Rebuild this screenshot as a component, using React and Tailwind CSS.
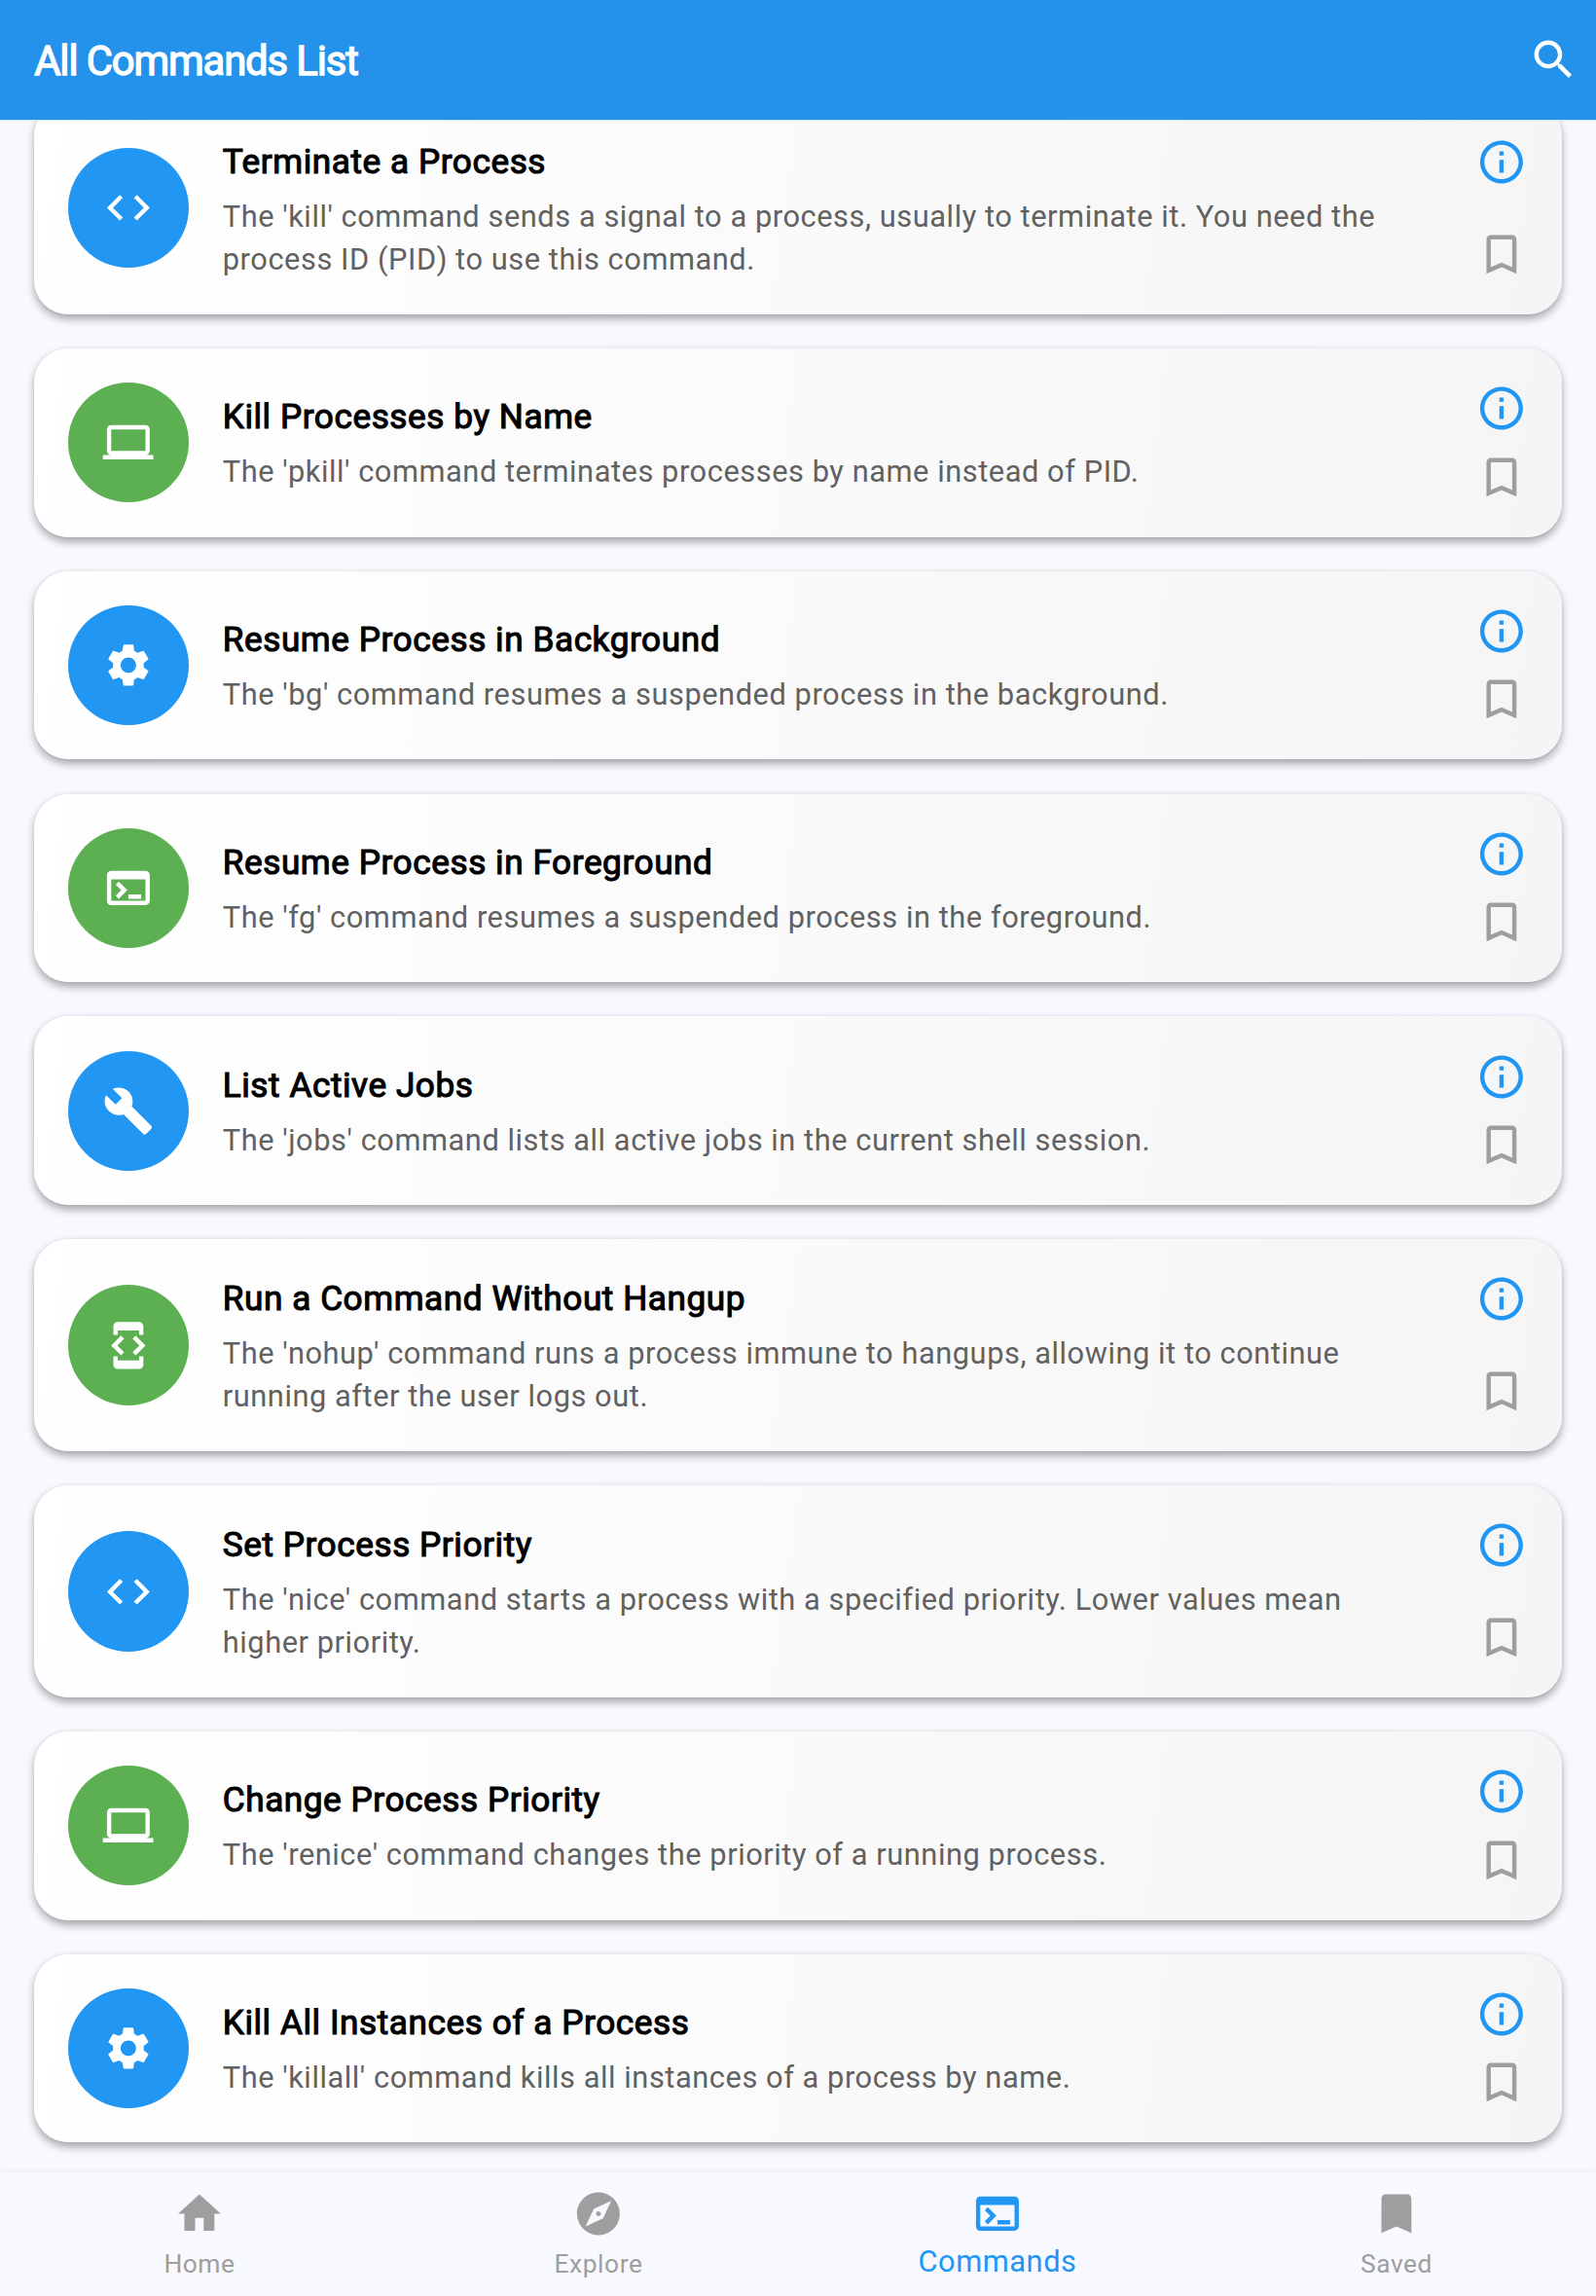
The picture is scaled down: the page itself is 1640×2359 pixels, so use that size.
import { MdCode, MdComputer, MdSettings, MdTerminal, MdBuild, MdDeveloperMode, MdInfoOutline, MdBookmarkBorder, MdSearch, MdHome, MdExplore, MdBookmark } from 'react-icons/md';

const commands = [
  { title: 'Terminate a Process', lines: ["The 'kill' command sends a signal to a process, usually to terminate it. You need the", 'process ID (PID) to use this command.'], icon: MdCode },
  { title: 'Kill Processes by Name', lines: ["The 'pkill' command terminates processes by name instead of PID."], icon: MdComputer },
  { title: 'Resume Process in Background', lines: ["The 'bg' command resumes a suspended process in the background."], icon: MdSettings },
  { title: 'Resume Process in Foreground', lines: ["The 'fg' command resumes a suspended process in the foreground."], icon: MdTerminal },
  { title: 'List Active Jobs', lines: ["The 'jobs' command lists all active jobs in the current shell session."], icon: MdBuild },
  { title: 'Run a Command Without Hangup', lines: ["The 'nohup' command runs a process immune to hangups, allowing it to continue", 'running after the user logs out.'], icon: MdDeveloperMode },
  { title: 'Set Process Priority', lines: ["The 'nice' command starts a process with a specified priority. Lower values mean", 'higher priority.'], icon: MdCode },
  { title: 'Change Process Priority', lines: ["The 'renice' command changes the priority of a running process."], icon: MdComputer },
  { title: 'Kill All Instances of a Process', lines: ["The 'killall' command kills all instances of a process by name."], icon: MdSettings },
];

const tabs = [
  { label: 'Home', icon: MdHome },
  { label: 'Explore', icon: MdExplore },
  { label: 'Commands', icon: MdTerminal, active: true },
  { label: 'Saved', icon: MdBookmark },
];

function CommandCard({ title, lines, icon: Icon, green }) {
  const tall = lines.length > 1;
  return (
    <article
      className={`flex shrink-0 gap-[35.2px] rounded-[35.2px] p-[35.2px] shadow-[0_4.4px_9px_rgba(0,0,0,0.33),0_0_3px_rgba(0,0,0,0.05)] ${
        tall ? 'h-[217.8px] bg-[linear-gradient(97.9deg,#ffffff,#f5f5f5)]' : 'h-[193.6px] bg-[linear-gradient(97deg,#ffffff,#f5f5f5)]'
      }`}
    >
      <div className={`flex size-[123.2px] shrink-0 items-center justify-center self-center rounded-full text-white ${green ? 'bg-[#5cb052]' : 'bg-[#2196f3]'}`}>
        <Icon className="size-[52.8px] -translate-x-[0.5px]" />
      </div>
      <div className={`flex min-w-0 flex-1 flex-col justify-center whitespace-nowrap ${tall ? 'pt-[0.6px]' : ''}`}>
        <h2 className={`text-[35.2px] leading-[52.8px] tracking-[0.55px] text-black [-webkit-text-stroke:1.1px_black] ${tall ? 'mb-[8.6px]' : 'mb-[8px]'}`}>{title}</h2>
        {lines.map((line) => (
          <p key={line} className="text-[30.8px] leading-[44px] tracking-[0.55px] text-[#616161]">{line}</p>
        ))}
      </div>
      <div className="flex flex-col justify-between">
        <MdInfoOutline className="size-[52.8px] -translate-x-[0.5px] text-[#2196f3]" />
        <MdBookmarkBorder className="size-[52.8px] -translate-x-[0.5px] text-[#9e9e9e]" />
      </div>
    </article>
  );
}

export default function App() {
  return (
    <div className="flex h-[2359px] w-[1640px] flex-col overflow-hidden bg-[#f8f9ff] font-[Roboto,sans-serif]">
      <header className="z-10 flex h-[124px] shrink-0 items-center justify-between border-b border-[#cde5fb] bg-[#2492eb] pr-[17.6px] pl-[35.2px] text-white">
        <h1 className="pt-[2px] text-[41.8px] leading-[50px] tracking-[-1.12px] [-webkit-text-stroke:1.3px_white]">All Commands List</h1>
        <MdSearch className="size-[52.8px]" />
      </header>
      <main className="min-h-0 flex-1 overflow-hidden">
        <div className="mt-[-19px] flex flex-col gap-[35.2px] px-[35.2px]">
          {commands.map((c, i) => (
            <CommandCard key={c.title} {...c} green={i % 2 === 1} />
          ))}
        </div>
      </main>
      <nav className="z-10 grid h-[127px] shrink-0 grid-cols-4 bg-[#f8f9ff] shadow-[0_0_6px_rgba(0,0,0,0.08)]">
        {tabs.map(({ label, icon: Icon, active }) => (
          <div key={label} className={`flex flex-col items-center pt-[16.4px] ${active ? 'text-[#2196f3]' : 'text-[#9e9e9e]'}`}>
            <Icon className="size-[52.8px] -translate-x-[0.5px]" />
            <span className={`leading-[36px] ${active ? 'mt-[5px] text-[30.8px] tracking-[0.55px]' : 'mt-[6.8px] text-[26.4px] tracking-[0.55px]'}`}>{label}</span>
          </div>
        ))}
      </nav>
    </div>
  );
}
